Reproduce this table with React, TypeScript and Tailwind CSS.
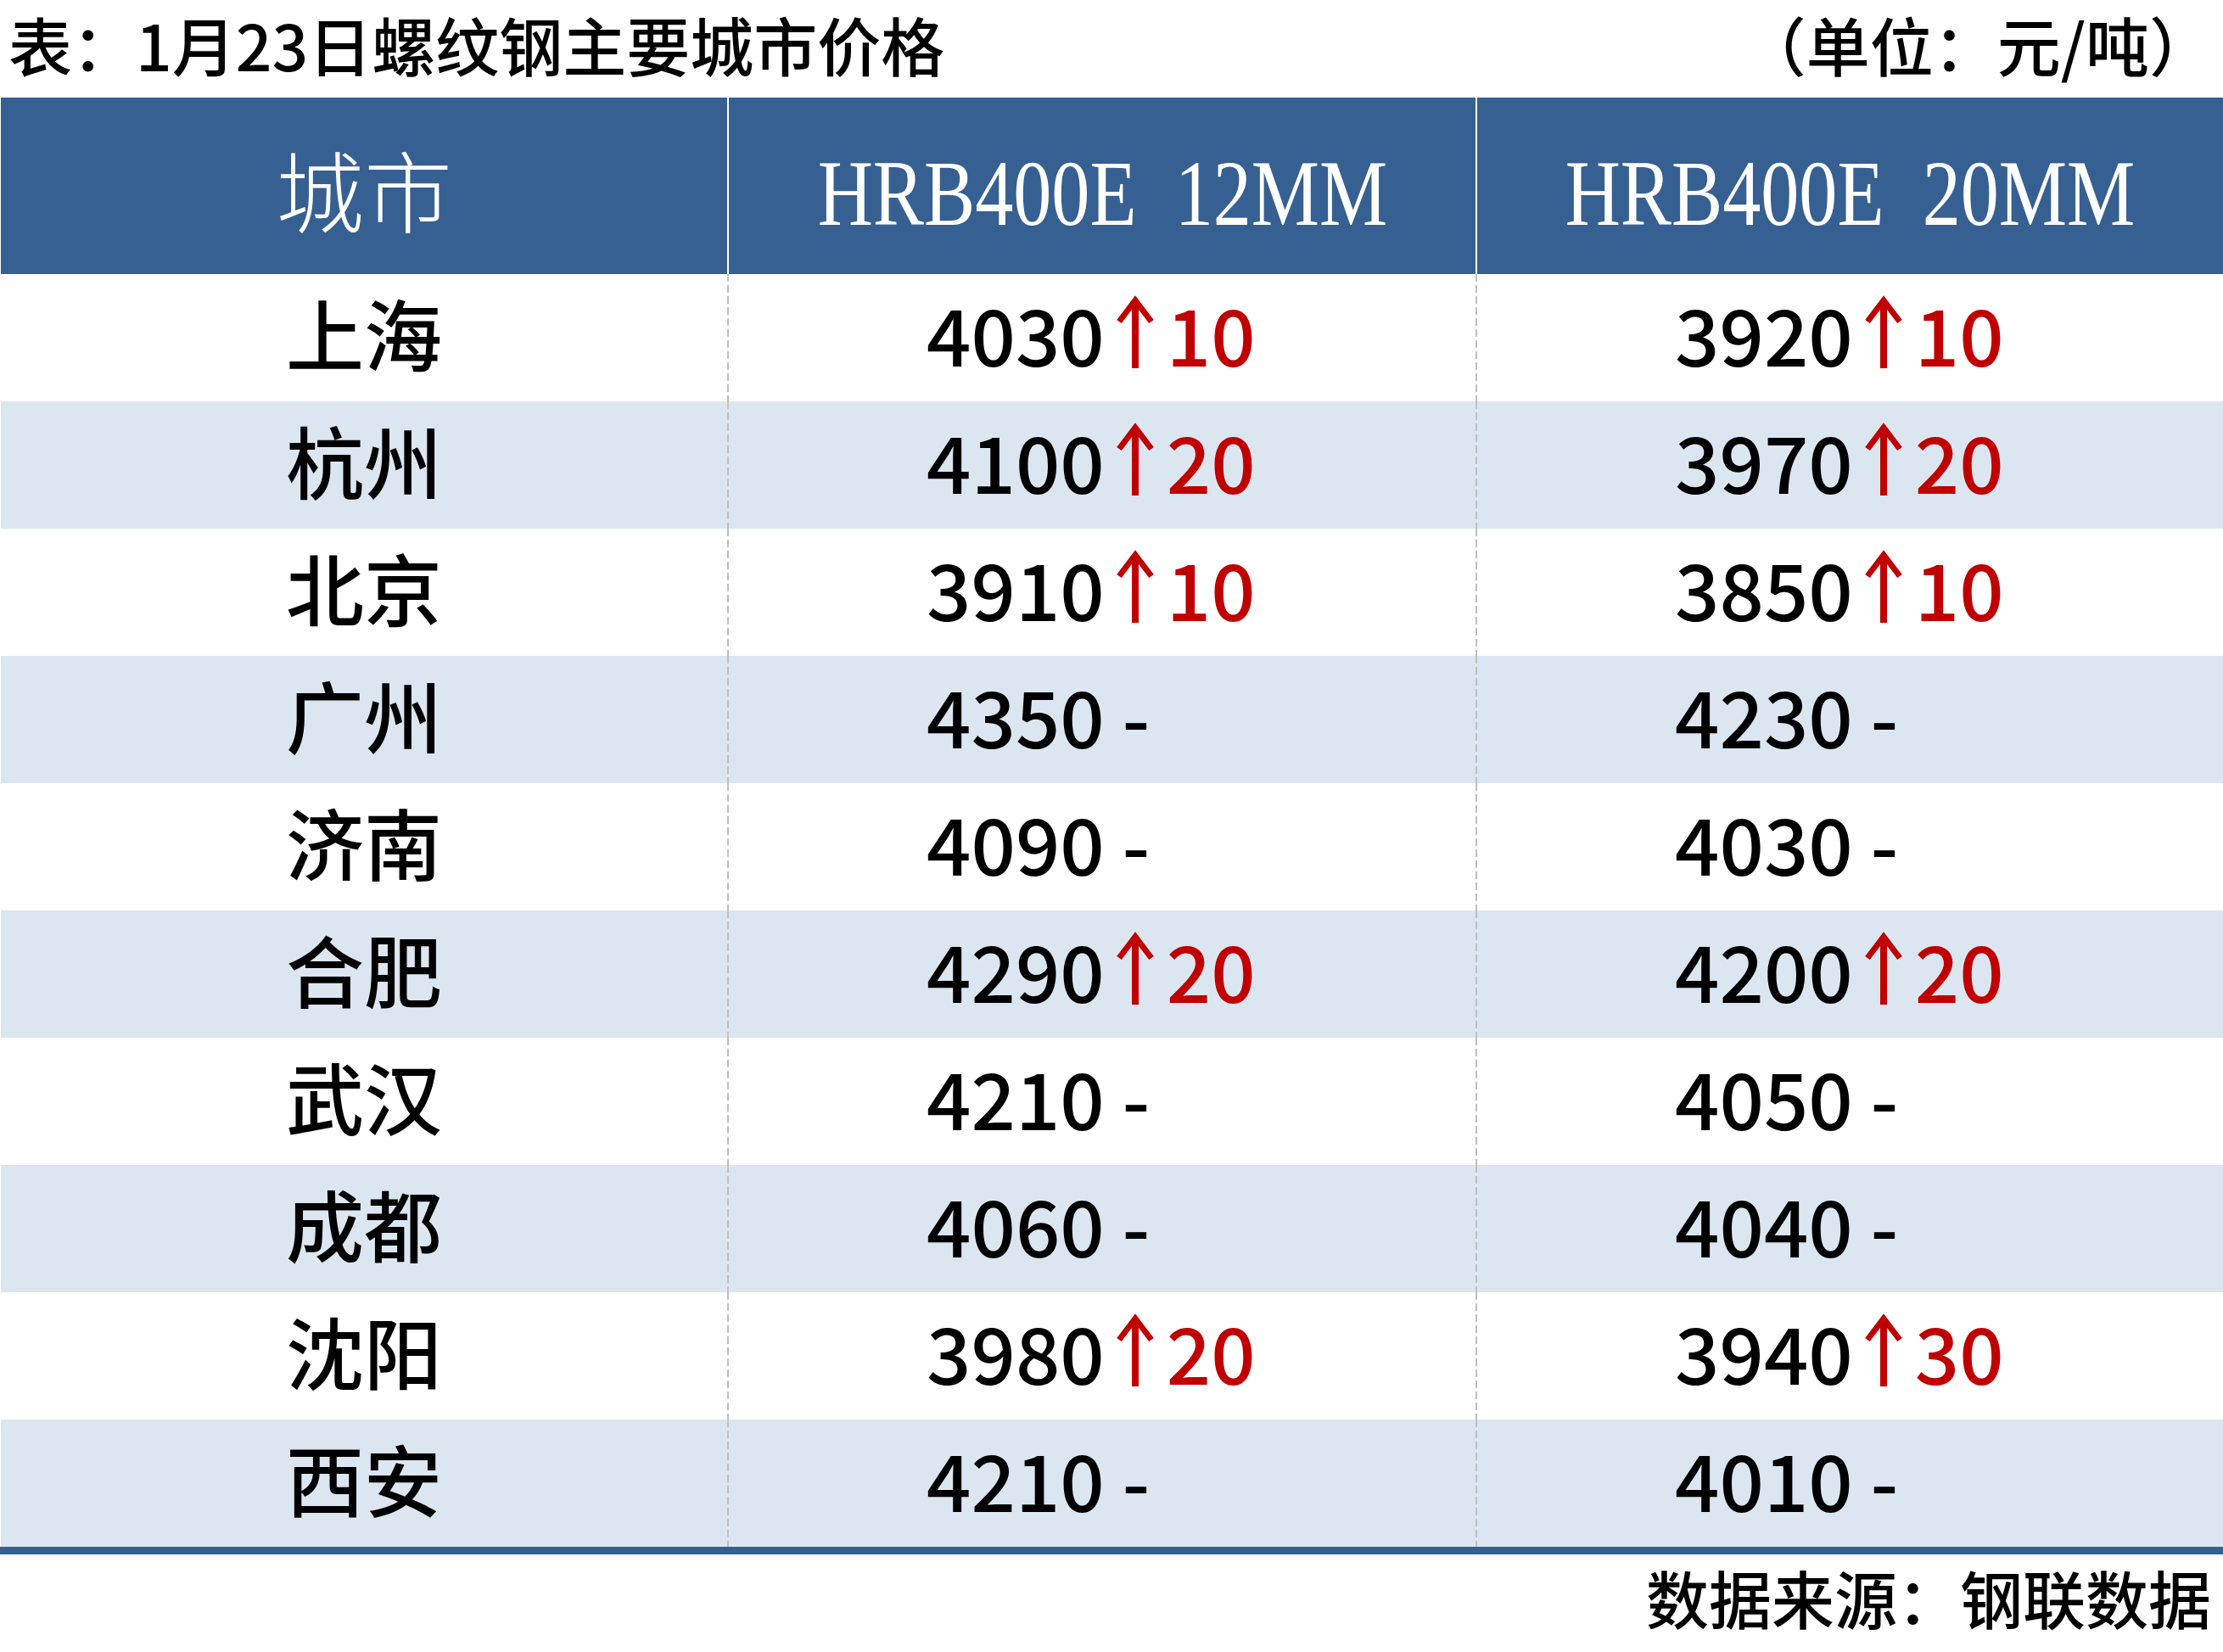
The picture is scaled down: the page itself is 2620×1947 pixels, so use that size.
import React from "react";

type Cell = { v: string; d?: string };
type Row = { city: string; a: Cell; b: Cell };

const rows: Row[] = [
  { city: "上海", a: { v: "4030", d: "10" }, b: { v: "3920", d: "10" } },
  { city: "杭州", a: { v: "4100", d: "20" }, b: { v: "3970", d: "20" } },
  { city: "北京", a: { v: "3910", d: "10" }, b: { v: "3850", d: "10" } },
  { city: "广州", a: { v: "4350" }, b: { v: "4230" } },
  { city: "济南", a: { v: "4090" }, b: { v: "4030" } },
  { city: "合肥", a: { v: "4290", d: "20" }, b: { v: "4200", d: "20" } },
  { city: "武汉", a: { v: "4210" }, b: { v: "4050" } },
  { city: "成都", a: { v: "4060" }, b: { v: "4040" } },
  { city: "沈阳", a: { v: "3980", d: "20" }, b: { v: "3940", d: "30" } },
  { city: "西安", a: { v: "4210" }, b: { v: "4010" } },
];

function UpArrow() {
  return (
    <span className="inline-flex w-[73px] justify-center self-center pb-[2px]">
      <svg width="44" height="86" viewBox="0 0 44 86" fill="none">
        <line x1="22" y1="8" x2="22" y2="86" stroke="#c00000" strokeWidth="8" />
        <polyline
          points="3,31 22,6 41,31"
          stroke="#c00000"
          strokeWidth="7"
          strokeLinejoin="miter"
          fill="none"
        />
      </svg>
    </span>
  );
}

function NumCell({ c, wide }: { c: Cell; wide: boolean }) {
  return (
    <div
      className={
        (wide ? "w-[880px]" : "flex-1") +
        " flex items-center pl-[233px] pb-[12px] text-[92px] leading-none font-medium"
      }
    >
      <span className="text-black">{c.v}</span>
      {c.d ? (
        <>
          <UpArrow />
          <span className="text-[#c00000]">{c.d}</span>
        </>
      ) : (
        <span className="text-black whitespace-pre"> -</span>
      )}
    </div>
  );
}

function Dashed() {
  return (
    <div className="w-[2px] self-stretch bg-[repeating-linear-gradient(to_bottom,#c0c0c0_0px,#c0c0c0_9px,transparent_9px,transparent_13px)]" />
  );
}

export default function App() {
  return (
    <div className="w-[2620px] h-[1947px] bg-white font-['Noto_Sans_CJK_SC','Noto_Sans',sans-serif] text-black flex flex-col">
      <div className="h-[115px] flex items-center justify-between pl-[10px] pr-[12px] pb-[12px] text-[75px] leading-none font-medium">
        <span>表：1月23日螺纹钢主要城市价格</span>
        <span>（单位：元/吨）</span>
      </div>

      <div className="flex h-[208px] bg-[#376092] text-white ml-px">
        <div className="w-[856px] flex items-center justify-center pt-[6px]">
          <span className="text-[104px] leading-none font-light">城市</span>
        </div>
        <div className="w-[2px] bg-white" />
        <div className="w-[880px] flex items-center justify-center pt-[18px]">
          <span className="inline-block font-['Liberation_Serif',serif] text-[110px] leading-none whitespace-pre scale-x-[0.82]">
            HRB400E  12MM
          </span>
        </div>
        <div className="w-[2px] bg-white" />
        <div className="flex-1 flex items-center justify-center pt-[18px]">
          <span className="inline-block font-['Liberation_Serif',serif] text-[110px] leading-none whitespace-pre scale-x-[0.82]">
            HRB400E  20MM
          </span>
        </div>
      </div>

      <div className="flex flex-col">
        {rows.map((r, i) => (
          <div
            key={r.city}
            className={
              "flex h-[150px] ml-px " + (i % 2 === 1 ? "bg-[#dce6f1]" : "bg-white")
            }
          >
            <div className="w-[856px] flex items-center justify-center pb-[14px]">
              <span className="text-[92px] leading-none font-medium">{r.city}</span>
            </div>
            <Dashed />
            <NumCell c={r.a} wide={true} />
            <Dashed />
            <NumCell c={r.b} wide={false} />
          </div>
        ))}
      </div>

      <div className="h-[9px] bg-[#376092]" />

      <div className="flex-1 flex items-center justify-end pr-[14px] pb-[15px] text-[74px] leading-none font-medium">
        <span>数据来源：钢联数据</span>
      </div>
    </div>
  );
}
